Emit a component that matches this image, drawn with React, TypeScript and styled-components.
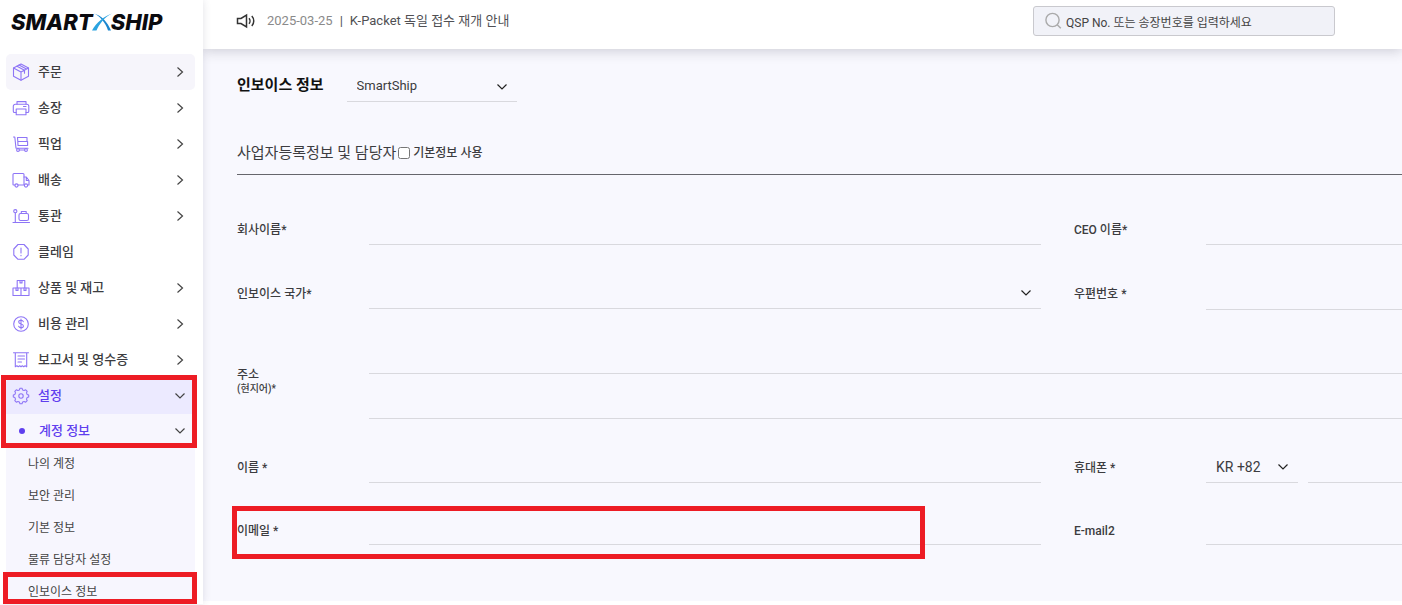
import React from "react";
import styled, { createGlobalStyle, css } from "styled-components";

const GlobalStyle = createGlobalStyle`
  *, *::before, *::after { box-sizing: border-box; }
  body {
    margin: 0;
    background: #fff;
    color: #3c3c40;
    font-family: Roboto, "Noto Sans CJK KR", sans-serif;
    font-size: 12px;
    line-height: 16px;
  }
  button, input, select { font: inherit; color: inherit; margin: 0; }
  ul { list-style: none; margin: 0; padding: 0; }
  h1, h2, p { margin: 0; }
`;

const RED = "#ed1c24";

/* ---------- page frame ---------- */

const Shell = styled.div`
  display: flex;
  min-height: 100vh;
  overflow: hidden;
`;

const Sidebar = styled.aside`
  position: relative;
  z-index: 2;
  flex: 0 0 203px;
  background: #fff;
  box-shadow: 0 0 8px rgba(60, 60, 90, 0.14);
  margin-bottom: 1px;
`;

const Page = styled.div`
  flex: 1;
  min-width: 0;
  display: flex;
  flex-direction: column;
  margin-bottom: 4px;
`;

/* ---------- sidebar ---------- */

const Logo = styled.a`
  display: flex;
  align-items: center;
  height: 43px;
  padding-left: 11px;
  color: #0b0b0f;
  text-decoration: none;
  font-family: Inter, "Liberation Sans", sans-serif;
  font-size: 22px;
  font-weight: 800;
  font-style: italic;
  line-height: 24px;
`;

const LogoMark = styled.svg`
  width: 20px;
  height: 18px;
  flex: none;
  margin: 0 -1px;
`;

const Nav = styled.nav`
  padding: 11px 8px 0 6px;
`;

const NavButton = styled.button<{ $tone?: "hover" | "active" }>`
  display: flex;
  align-items: center;
  width: 100%;
  height: 36px;
  padding: 0 8px 0 6px;
  border: 0;
  border-radius: 5px;
  background: transparent;
  font-size: 13px;
  font-weight: 500;
  line-height: 20px;
  text-align: left;
  cursor: pointer;
  ${({ $tone }) => $tone === "hover" && css`background: #f6f5fb;`}
  ${({ $tone }) =>
    $tone === "active" &&
    css`
      background: #eceaff;
      color: #5f3fee;
      border-radius: 5px 5px 0 0;
    `}
`;

const NavIcon = styled.svg`
  width: 18px;
  height: 18px;
  flex: none;
  margin-right: 8px;
  fill: none;
  stroke: #8e75f6;
  stroke-width: 1.1;
  stroke-linecap: round;
  stroke-linejoin: round;
`;

const NavText = styled.span`
  flex: 1;
`;

const Chevron = styled.svg`
  width: 14px;
  height: 14px;
  flex: none;
  fill: none;
  stroke: #444;
  stroke-width: 1.2;
`;

const ActiveGroup = styled.div`
  position: relative;
`;

const SubButton = styled(NavButton)`
  height: 34px;
  border-radius: 0;
  background: #f7f6fe;
  color: #5f3fee;
`;

const Dot = styled.span`
  width: 6px;
  height: 6px;
  margin: 0 14px 0 7px;
  border-radius: 50%;
  background: #5f3fee;
`;

const SubList = styled.ul`
  display: grid;
  gap: 12px;
  padding-top: 6px;
  background: #f7f6fe;
`;

const SubItem = styled.li`
  position: relative;
  height: 20px;
  padding-left: 22px;
`;

const SubLink = styled.a`
  display: block;
  color: #444;
  text-decoration: none;
  line-height: 20px;
`;

const Highlight = styled.span<{ $inset: string }>`
  position: absolute;
  inset: ${({ $inset }) => $inset};
  border: 5px solid ${RED};
  pointer-events: none;
`;

/* ---------- header ---------- */

const Header = styled.header`
  position: relative;
  z-index: 1;
  display: flex;
  align-items: flex-start;
  justify-content: space-between;
  height: 49px;
  padding: 6px 67px 0 33px;
  background: #fff;
  box-shadow: 0 2px 12px rgba(50, 50, 70, 0.22);
`;

const Notice = styled.p`
  display: flex;
  align-items: center;
  height: 30px;
  gap: 7px;
  font-size: 13px;
  color: #505054;
`;

const Speaker = styled.svg`
  width: 20px;
  height: 16px;
  margin-right: 4px;
  fill: none;
  stroke: #333;
  stroke-width: 1.5;
`;

const NoticeDate = styled.time`
  color: #8a8a8a;
`;

const SearchBox = styled.label`
  display: flex;
  align-items: center;
  gap: 4px;
  width: 302px;
  height: 30px;
  padding: 0 10px;
  border: 1px solid #c9c9ce;
  border-radius: 3px;
  background: #f1f2f8;
`;

const SearchIcon = styled.svg`
  width: 18px;
  height: 18px;
  flex: none;
  fill: none;
  stroke: #aaa;
  stroke-width: 1.4;
`;

const SearchInput = styled.input`
  flex: 1;
  min-width: 0;
  height: 28px;
  padding: 3px 0 0;
  border: 0;
  outline: 0;
  background: transparent;
  &::placeholder { color: #444; opacity: 1; }
`;

/* ---------- content ---------- */

const Content = styled.main`
  flex: 1;
  padding: 22px 0 32px 34px;
  background: #f8f8fe;
`;

const TitleRow = styled.div`
  display: flex;
  align-items: flex-start;
  gap: 23px;
`;

const Title = styled.h1`
  color: #111;
  font-size: 15px;
  font-weight: 700;
  line-height: 28px;
`;

const SelectWrap = styled.div<{ $width?: number; $height?: number }>`
  position: relative;
  flex: none;
  width: ${({ $width }) => ($width ? `${$width}px` : "100%")};
  height: ${({ $height }) => $height ?? 32}px;
  ${Chevron} {
    position: absolute;
    right: 8px;
    top: 50%;
    margin-top: -7px;
    stroke: #222;
    pointer-events: none;
  }
`;

const Select = styled.select<{ $size?: number }>`
  width: 100%;
  height: 100%;
  padding: 0 24px 0 10px;
  border: 0;
  border-bottom: 1px solid #d9d9de;
  border-radius: 0;
  outline: 0;
  appearance: none;
  background: transparent;
  font-size: ${({ $size }) => $size ?? 13}px;
`;

const SectionHead = styled.div`
  display: flex;
  align-items: center;
  gap: 2px;
  margin-top: 30px;
  height: 43px;
  border-bottom: 1px solid #66666c;
`;

const SectionTitle = styled.h2`
  font-size: 15px;
  font-weight: 400;
  line-height: 24px;
`;

const CheckLabel = styled.label`
  display: flex;
  align-items: center;
  gap: 3px;
  font-weight: 500;
`;

const Checkbox = styled.input`
  width: 12px;
  height: 12px;
`;

const Form = styled.form`
  display: grid;
  gap: 32px;
  padding-top: 38px;
`;

const FormRow = styled.div`
  position: relative;
  display: grid;
  grid-template-columns: 132px minmax(0, 24fr) 33px 132px minmax(0, 7fr);
`;

const Label = styled.label<{ $second?: boolean }>`
  grid-column: ${({ $second }) => ($second ? 4 : 1)};
  align-self: center;
  padding-top: 1px;
  font-weight: 500;
`;

const Small = styled.span`
  display: block;
  font-size: 10px;
  line-height: 12px;
`;

const Field = styled.div<{ $column: string }>`
  grid-column: ${({ $column }) => $column};
  display: flex;
  gap: 10px;
`;

const Stack = styled(Field)`
  flex-direction: column;
  gap: 13px;
`;

const Input = styled.input<{ $height?: number }>`
  flex: 1 0 auto;
  width: 0;
  min-width: 0;
  height: ${({ $height }) => $height ?? 32}px;
  padding: 0 10px;
  border: 0;
  border-bottom: 1px solid #d9d9de;
  border-radius: 0;
  outline: 0;
  background: transparent;
  ${Stack} & { flex: none; width: 100%; }
`;

/* ---------- icons ---------- */

const Right = () => (
  <Chevron viewBox="0 0 14 14" aria-hidden="true"><path d="M4.500 2.500l5 4.500-5 4.500" /></Chevron>
);
const Down = () => (
  <Chevron viewBox="0 0 14 14" aria-hidden="true"><path d="M2.500 4.500L7 9l4.500-4.500" /></Chevron>
);

const icons = {
  box: (
    <>
      <path d="M9 1l7.500 4v8.2L9 17.2 1.500 13.200V5z" />
      <path d="M1.500 5L9 9l7.500-4M9 9v8M5 3.200l7.500 4v3M7 2.100l7.500 4" />
    </>
  ),
  printer: (
    <>
      <path d="M5 5.200V2.600h9v2.600" />
      <path d="M4 13.500H2.600A1.300 1.300 0 011.300 12.200V7.200a2 2 0 012-2h11.500a2 2 0 012 2v5a1.300 1.300 0 01-1.300 1.300H14" />
      <path d="M4.200 10h9.800v5.800H4.200zM11.500 7.500h2.500" />
    </>
  ),
  dolly: (
    <>
      <path d="M1.500 2h1.300l1.200 11.300h12" />
      <path d="M5.500 2.500h9.500v4H5.800zM5.800 6.500h9.800v4H6z" />
      <circle cx="6" cy="15" r="1.400" /><circle cx="14" cy="15" r="1.400" />
      <path d="M7.400 15h5.200" />
    </>
  ),
  truck: (
    <>
      <path d="M3 14H1.500a.5.5 0 01-.5-.5V3.500a1 1 0 011-1h9a1 1 0 011 1V14H6" />
      <path d="M12 6h2.300L17 9.500V14h-1M14.300 6v3.500H17" />
      <circle cx="4.500" cy="14.500" r="1.600" /><circle cx="14" cy="14.500" r="1.600" />
    </>
  ),
  customs: (
    <>
      <path d="M1 15.500h16.500M3.300 6v9.500" />
      <circle cx="3.300" cy="4.200" r="1.600" />
      <rect x="7" y="6.500" width="9.500" height="7" rx="1.600" />
      <path d="M9.300 6.500V4.500h4.900v2" />
    </>
  ),
  claim: (
    <>
      <path d="M6 1.500h6L16.200 6v6L12 16.300H6L1.800 12V6z" />
      <path d="M9 5v5M9 12.300v.4" />
    </>
  ),
  stock: (
    <>
      <path d="M5.200 1.500h7.600V9H5.200zM1 9h8v7.500H1zM9 9h8v7.500H9z" />
      <path d="M8 1.500v2.400h2V1.500M4 9v2.400h2V9M12 9v2.400h2V9" />
    </>
  ),
  money: (
    <>
      <circle cx="9" cy="9" r="7.300" />
      <path d="M11.300 6.700c-.3-1-1.200-1.400-2.300-1.400-1.300 0-2.300.6-2.300 1.800 0 2.600 4.700 1.200 4.700 3.800 0 1.200-1 1.800-2.400 1.800-1.200 0-2.100-.5-2.400-1.500M9 4v10" />
    </>
  ),
  receipt: (
    <>
      <path d="M1.500 1.800h15M3.300 1.800v14l1.600-1 1.400 1 1.400-1 1.300 1 1.300-1 1.400 1 1.400-1 1.600 1v-14" />
      <path d="M6 5h6.500M6 8h6.500M6 11h3.500" />
    </>
  ),
  gear: (
    <>
      <path d="M7.400 2.900L8 1.300h2l.6 1.600 1.500.6 1.600-.7 1.500 1.500-.7 1.600.6 1.500 1.600.6v2l-1.600.6-.6 1.500.7 1.600-1.500 1.500-1.600-.7-1.500.6-.6 1.600H8l-.6-1.600-1.500-.6-1.600.7-1.500-1.500.7-1.600-.6-1.500L1.300 10V8l1.600-.6.6-1.500-.7-1.600 1.500-1.500 1.600.7z" />
      <circle cx="9" cy="9" r="2.200" />
    </>
  ),
};

const menu: { icon: keyof typeof icons; text: string; leaf?: boolean }[] = [
  { icon: "box", text: "주문" },
  { icon: "printer", text: "송장" },
  { icon: "dolly", text: "픽업" },
  { icon: "truck", text: "배송" },
  { icon: "customs", text: "통관" },
  { icon: "claim", text: "클레임", leaf: true },
  { icon: "stock", text: "상품 및 재고" },
  { icon: "money", text: "비용 관리" },
  { icon: "receipt", text: "보고서 및 영수증" },
];

const accountPages = ["나의 계정", "보안 관리", "기본 정보", "물류 담당자 설정", "인보이스 정보"];

const Icon = ({ name }: { name: keyof typeof icons }) => (
  <NavIcon viewBox="0 0 18 18" aria-hidden="true">{icons[name]}</NavIcon>
);

export default function App() {
  return (
    <>
      <GlobalStyle />
      <Shell>
        <Sidebar>
          <Logo href="#">
            SMART
            <LogoMark viewBox="0 0 20 18" aria-hidden="true">
              <path d="M2 .5C7.500 3 13.500 9.500 16 17.500h3C15.500 9 9.500 2.500 2 .5z" fill="#1b86cf" />
              <path d="M20 .5C12 3 4 10 0 17.500h4.500C7 11.500 12.500 4 20 .5z" fill="#2ba3e0" />
            </LogoMark>
            SHIP
          </Logo>
          <Nav>
            {menu.map((item, i) => (
              <NavButton key={item.text} type="button" $tone={i === 0 ? "hover" : undefined}>
                <Icon name={item.icon} />
                <NavText>{item.text}</NavText>
                {!item.leaf && <Right />}
              </NavButton>
            ))}
            <ActiveGroup>
              <NavButton type="button" $tone="active" aria-expanded="true">
                <Icon name="gear" />
                <NavText>설정</NavText>
                <Down />
              </NavButton>
              <SubButton type="button" aria-expanded="true">
                <Dot />
                <NavText>계정 정보</NavText>
                <Down />
              </SubButton>
              <Highlight $inset="-3px -2px 0 -5px" />
            </ActiveGroup>
            <SubList>
              {accountPages.map((text, i) => (
                <SubItem key={text}>
                  <SubLink href="#">{text}</SubLink>
                  {i === accountPages.length - 1 && <Highlight $inset="-10px -2px -2px -3px" />}
                </SubItem>
              ))}
            </SubList>
          </Nav>
        </Sidebar>

        <Page>
          <Header>
            <Notice>
              <Speaker viewBox="0 0 20 16" aria-hidden="true">
                <path d="M1.500 5.500H5L10.500 2v12L5 10.500H1.500zM13 5.200c1.300 1.500 1.300 4.100 0 5.600M15.800 3c2.600 2.700 2.600 7.300 0 10" />
              </Speaker>
              <NoticeDate>2025-03-25</NoticeDate>
              <span>|</span>
              <span>K-Packet 독일 접수 재개 안내</span>
            </Notice>
            <SearchBox>
              <SearchIcon viewBox="0 0 18 18" aria-hidden="true">
                <circle cx="8.500" cy="8" r="6.600" />
                <path d="M13.200 12.700l3.600 3.600" />
              </SearchIcon>
              <SearchInput type="text" aria-label="검색" placeholder="QSP No. 또는 송장번호를 입력하세요" />
            </SearchBox>
          </Header>

          <Content>
            <TitleRow>
              <Title>인보이스 정보</Title>
              <SelectWrap $width={170} $height={31}>
                <Select aria-label="인보이스 정보">
                  <option>SmartShip</option>
                </Select>
                <Down />
              </SelectWrap>
            </TitleRow>

            <SectionHead>
              <SectionTitle>사업자등록정보 및 담당자</SectionTitle>
              <CheckLabel>
                <Checkbox type="checkbox" />
                기본정보 사용
              </CheckLabel>
            </SectionHead>

            <Form>
              <FormRow>
                <Label htmlFor="company">회사이름*</Label>
                <Field $column="2"><Input id="company" /></Field>
                <Label htmlFor="ceo" $second>CEO 이름*</Label>
                <Field $column="5"><Input id="ceo" /></Field>
              </FormRow>
              <FormRow>
                <Label htmlFor="country">인보이스 국가*</Label>
                <Field $column="2">
                  <SelectWrap>
                    <Select id="country"><option></option></Select>
                    <Down />
                  </SelectWrap>
                </Field>
                <Label htmlFor="zip" $second>우편번호 *</Label>
                <Field $column="5"><Input id="zip" $height={33} /></Field>
              </FormRow>
              <FormRow>
                <Label htmlFor="address1">
                  주소
                  <Small>(현지어)*</Small>
                </Label>
                <Stack $column="2 / -1">
                  <Input id="address1" />
                  <Input aria-label="주소 2" />
                </Stack>
              </FormRow>
              <FormRow>
                <Label htmlFor="name">이름 *</Label>
                <Field $column="2"><Input id="name" /></Field>
                <Label htmlFor="phone" $second>휴대폰 *</Label>
                <Field $column="5">
                  <SelectWrap $width={92}>
                    <Select $size={14} aria-label="국가 번호"><option>KR +82</option></Select>
                    <Down />
                  </SelectWrap>
                  <Input id="phone" />
                </Field>
              </FormRow>
              <FormRow>
                <Label htmlFor="email">이메일 *</Label>
                <Field $column="2"><Input id="email" $height={30} /></Field>
                <Label htmlFor="email2" $second>E-mail2</Label>
                <Field $column="5"><Input id="email2" $height={30} /></Field>
                <Highlight $inset="-9px 477px -14px -5px" />
              </FormRow>
            </Form>
          </Content>
        </Page>
      </Shell>
    </>
  );
}
